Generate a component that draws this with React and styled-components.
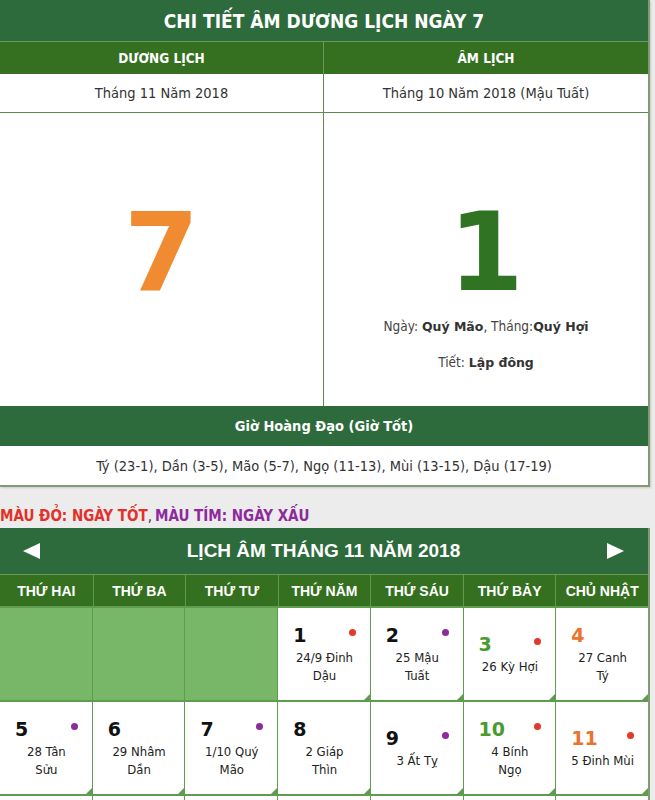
import React from "react";
import styled, { createGlobalStyle } from "styled-components";

const GlobalStyle = createGlobalStyle`
  body {
    margin: 0;
    background: #ececec;
    font-family: "DejaVu Sans Condensed", "DejaVu Sans", sans-serif;
    color: #333;
  }
`;

const calendarRows = [
  [
    null,
    null,
    null,
    { day: 1, lunar: ["24/9 Đinh", "Dậu"], dot: "red" },
    { day: 2, lunar: ["25 Mậu", "Tuất"], dot: "purple" },
    { day: 3, tone: "green", lunar: ["26 Kỳ Hợi"], dot: "red" },
    { day: 4, tone: "orange", lunar: ["27 Canh", "Tý"] },
  ],
  [
    { day: 5, lunar: ["28 Tân", "Sửu"], dot: "purple" },
    { day: 6, lunar: ["29 Nhâm", "Dần"] },
    { day: 7, lunar: ["1/10 Quý", "Mão"], dot: "purple" },
    { day: 8, lunar: ["2 Giáp", "Thìn"] },
    { day: 9, lunar: ["3 Ất Tỵ"], dot: "purple" },
    { day: 10, tone: "green", lunar: ["4 Bính", "Ngọ"], dot: "red" },
    { day: 11, tone: "orange", lunar: ["5 Đinh Mùi"], dot: "red" },
  ],
];

const weekdays = ["THỨ HAI", "THỨ BA", "THỨ TƯ", "THỨ NĂM", "THỨ SÁU", "THỨ BẢY", "CHỦ NHẬT"];

const toneColors = { green: "#4b9a31", orange: "#ea7330" };
const dotColors = { red: "#e2392c", purple: "#8c2b9c" };

function Arrow({ dir }) {
  return (
    <svg width="17" height="16" viewBox="0 0 17 16">
      {dir === "left" ? (
        <polygon points="17,0 17,16 0,8" fill="#fff" />
      ) : (
        <polygon points="0,0 0,16 17,8" fill="#fff" />
      )}
    </svg>
  );
}

function App() {
  return (
    <Page>
      <GlobalStyle />
      <Panel>
        <TitleBar>CHI TIẾT ÂM DƯƠNG LỊCH NGÀY 7</TitleBar>
        <TwoCols>
          <HeadCell>DƯƠNG LỊCH</HeadCell>
          <HeadCell $divider>ÂM LỊCH</HeadCell>
          <MonthCell>Tháng 11 Năm 2018</MonthCell>
          <MonthCell $divider>Tháng 10 Năm 2018 (Mậu Tuất)</MonthCell>
          <BigCell>
            <BigNumber $color="#f08b31">7</BigNumber>
          </BigCell>
          <BigCell $divider>
            <BigNumber $color="#2f7323">1</BigNumber>
            <InfoLine>
              Ngày: <b>Quý Mão</b>, Tháng:<b>Quý Hợi</b>
            </InfoLine>
            <InfoLine $gap>
              Tiết: <b>Lập đông</b>
            </InfoLine>
          </BigCell>
        </TwoCols>
        <SubBar>Giờ Hoàng Đạo (Giờ Tốt)</SubBar>
        <HoursRow>
          Tý (23-1), Dần (3-5), Mão (5-7), Ngọ (11-13), Mùi (13-15), Dậu (17-19)
        </HoursRow>
      </Panel>

      <Legend>
        <LegendItem $color="#e2312a">MÀU ĐỎ: NGÀY TỐT</LegendItem>,
        <LegendItem $color="#8e2a9c">MÀU TÍM: NGÀY XẤU</LegendItem>
      </Legend>

      <CalendarPanel>
        <CalendarTitle>
          <Arrow dir="left" />
          <span>LỊCH ÂM THÁNG 11 NĂM 2018</span>
          <Arrow dir="right" />
        </CalendarTitle>
        <WeekHeader>
          {weekdays.map((w) => (
            <WeekDay key={w}>{w}</WeekDay>
          ))}
        </WeekHeader>
        <DayGrid>
          {calendarRows.flat().map((cell, i) =>
            cell ? (
              <DayCell key={i}>
                <DayTop>
                  <DayNumber $tone={cell.tone}>{cell.day}</DayNumber>
                  {cell.dot && <Dot $color={dotColors[cell.dot]} />}
                </DayTop>
                <Lunar>
                  {cell.lunar.map((l) => (
                    <div key={l}>{l}</div>
                  ))}
                </Lunar>
              </DayCell>
            ) : (
              <EmptyCell key={i} />
            )
          )}
          {/* next week's row, cut off by the frame */}
          {weekdays.map((w) => (
            <DayCell key={"next-" + w} />
          ))}
        </DayGrid>
      </CalendarPanel>
    </Page>
  );
}

const Page = styled.div`
  width: 650px;
`;

const Panel = styled.div`
  background: #fff;
  border-right: 2px solid #7f9a74;
  border-bottom: 2px solid #7f9a74;
  box-shadow: 1px 1px 2px rgba(0, 0, 0, 0.15);
`;

const TitleBar = styled.div`
  height: 41px;
  background: #2e6b3c;
  color: #fff;
  font-weight: bold;
  font-size: 19px;
  display: flex;
  align-items: center;
  justify-content: center;
  border-bottom: 1px solid #6b9a5c;
`;

const TwoCols = styled.div`
  display: grid;
  grid-template-columns: 323px 1fr;
`;

const HeadCell = styled.div`
  height: 32px;
  background: #34701f;
  color: #fff;
  font-weight: bold;
  font-size: 13.5px;
  display: flex;
  align-items: center;
  justify-content: center;
  border-left: ${(p) => (p.$divider ? "1px solid #6a9a58" : "none")};
`;

const MonthCell = styled.div`
  height: 38px;
  font-size: 14.5px;
  color: #333;
  display: flex;
  align-items: center;
  justify-content: center;
  border-bottom: 1px solid #5e8a50;
  border-left: ${(p) => (p.$divider ? "1px solid #5e8a50" : "none")};
`;

const BigCell = styled.div`
  height: 293px;
  box-sizing: border-box;
  padding-top: 86px;
  display: flex;
  flex-direction: column;
  align-items: center;
  border-left: ${(p) => (p.$divider ? "1px solid #5e8a50" : "none")};
`;

const BigNumber = styled.div`
  font-family: "DejaVu Sans", sans-serif;
  font-weight: bold;
  font-size: 108px;
  line-height: 108px;
  color: ${(p) => p.$color};
`;

const InfoLine = styled.div`
  font-size: 13.5px;
  line-height: 18px;
  color: #444;
  margin-top: ${(p) => (p.$gap ? "17px" : "10px")};
  b {
    font-family: "DejaVu Sans", sans-serif;
    font-size: 12.5px;
    color: #333;
  }
`;

const SubBar = styled.div`
  height: 40px;
  background: #2e6b3c;
  color: #fff;
  font-weight: bold;
  font-size: 14.5px;
  display: flex;
  align-items: center;
  justify-content: center;
`;

const HoursRow = styled.div`
  height: 39px;
  font-size: 14.5px;
  color: #333;
  display: flex;
  align-items: center;
  justify-content: center;
`;

const Legend = styled.div`
  height: 20px;
  margin-top: 19px;
  margin-bottom: 2px;
  display: flex;
  align-items: center;
  font-size: 15px;
  color: #333;
  white-space: pre;
`;

const LegendItem = styled.span`
  color: ${(p) => p.$color};
  font-weight: bold;
  & + & {
    margin-left: 3px;
  }
`;

const CalendarPanel = styled.div`
  border-right: 2px solid #7f9a74;
  background: #5f9c50;
`;

const CalendarTitle = styled.div`
  height: 46px;
  background: #2e6b3c;
  color: #fff;
  font-family: "Liberation Sans", Arial, sans-serif;
  font-weight: bold;
  font-size: 19px;
  display: flex;
  align-items: center;
  justify-content: space-between;
  padding: 0 24px 0 23px;
  border-bottom: 1px solid #6b9a5c;
`;

const WeekHeader = styled.div`
  display: grid;
  grid-template-columns: repeat(7, 1fr);
  background: #34701f;
  border-bottom: 2px solid #5f9c50;
`;

const WeekDay = styled.div`
  height: 31px;
  color: #fff;
  font-family: "Liberation Sans", Arial, sans-serif;
  font-weight: bold;
  font-size: 14px;
  display: flex;
  align-items: center;
  justify-content: center;
  & + & {
    border-left: 1px solid #5d9a4b;
  }
`;

const DayGrid = styled.div`
  display: grid;
  grid-template-columns: repeat(7, 1fr);
  grid-auto-rows: 92px;
  gap: 2px 1px;
`;

const EmptyCell = styled.div`
  background: #77b767;
`;

const DayCell = styled.div`
  position: relative;
  background: #fff;
  display: flex;
  flex-direction: column;
  justify-content: center;
  padding: 0 14px 0 15px;
  &::after {
    content: "";
    position: absolute;
    right: 0;
    bottom: 0;
    border-left: 6px solid transparent;
    border-bottom: 6px solid #5f9c50;
  }
`;

const DayTop = styled.div`
  display: flex;
  align-items: center;
  justify-content: space-between;
  height: 22px;
`;

const DayNumber = styled.span`
  font-family: "DejaVu Sans", sans-serif;
  font-weight: bold;
  font-size: 19px;
  color: ${(p) => toneColors[p.$tone] || "#111"};
`;

const Dot = styled.span`
  width: 7px;
  height: 7px;
  border-radius: 50%;
  background: ${(p) => p.$color};
  margin-top: -4px;
`;

const Lunar = styled.div`
  margin: 3px -8px 0;
  font-size: 13px;
  line-height: 18px;
  text-align: center;
  white-space: nowrap;
  color: #222;
`;

export default App;
